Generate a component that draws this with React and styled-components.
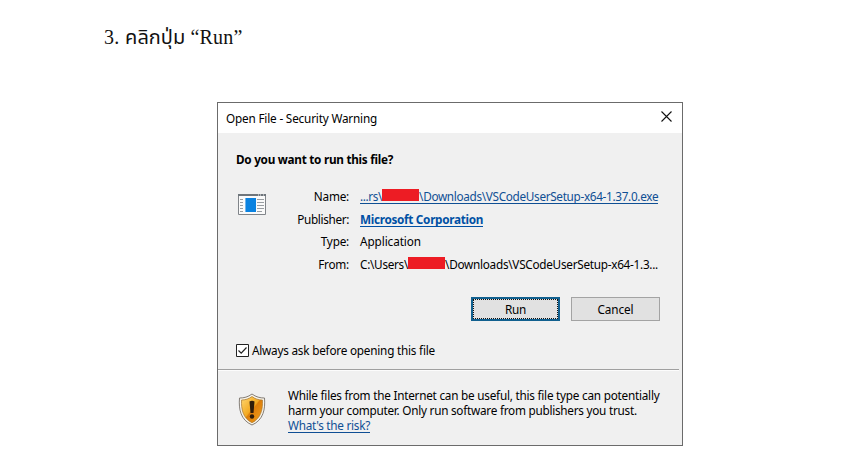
import React from 'react';
import styled, { createGlobalStyle } from 'styled-components';

const GlobalStyle = createGlobalStyle`
  * { box-sizing: border-box; }
  body { margin: 0; background: #fff; }
`;

const Page = styled.main`
  width: 861px;
  height: 466px;
  overflow: hidden;
  padding: 22px 0 0 104px;
`;

const Step = styled.h1`
  margin: 0;
  height: 80px;
  font: 400 20px/31px "Liberation Serif", "Noto Sans Thai", serif;
  letter-spacing: 0.2px;
  color: #111;
`;

const Thai = styled.span`
  font-size: 20px;
  letter-spacing: 0;
  margin-left: 0.5px;
`;

const Dialog = styled.section`
  width: 466px;
  height: 344px;
  margin-left: 113px;
  border: 1px solid #6b6b6b;
  background: #f0f0f0;
  color: #000;
  font: 400 11.75px/15px "Noto Sans", "Open Sans", sans-serif;
`;

const TitleBar = styled.header`
  height: 30px;
  display: flex;
  align-items: center;
  justify-content: space-between;
  padding: 0 10px 0 8px;
  background: #fff;
`;

const CloseIcon = styled.svg`
  width: 11px;
  height: 11px;
  margin-bottom: 3px;
`;

const Text = styled.span`
  white-space: pre;
  letter-spacing: ${(p) => p.$track ?? -0.22}px;
`;

const Question = styled.h2`
  margin: 0;
  padding: 19px 0 0 18px;
  height: 56px;
  font: inherit;
  font-weight: 700;
`;

const Details = styled.div`
  display: flex;
  height: 108px;
  padding-left: 20px;
`;

const FileIcon = styled.svg`
  width: 28px;
  height: 21px;
  margin-top: 5px;
`;

const Fields = styled.dl`
  margin: 0;
  display: grid;
  grid-template-columns: 83px 1fr;
  grid-template-rows: 23px 22px 23px 22px;
  column-gap: 11px;
`;

const Label = styled.dt`
  text-align: right;
`;

const Value = styled.dd`
  margin: 0;
  display: flex;
  white-space: pre;
`;

const Link = styled.a`
  display: flex;
  height: 15px;
  color: ${(p) => (p.$strong ? '#0050a4' : '#0f4f94')};
  font-weight: ${(p) => (p.$strong ? 700 : 400)};
  box-shadow: 0 -1px 0 ${(p) => (p.$strong ? '#0050a4' : '#0f4f94')} inset;
`;

const Redaction = styled.span`
  width: ${(p) => p.$width}px;
  height: 12px;
  background: #ed1c24;
`;

const Actions = styled.div`
  display: flex;
  justify-content: flex-end;
  gap: 11px;
  padding: 0 22px 0 0;
  height: 47px;
`;

const Button = styled.button`
  width: 89px;
  height: 24px;
  padding: 0;
  border: ${(p) => (p.$primary ? '2px solid #11608f' : '1px solid #a3a3a3')};
  background: #e1e1e1;
  color: #000;
  font: inherit;
  outline: ${(p) => (p.$primary ? '1px dotted #111' : 'none')};
  outline-offset: -3px;
`;

const CheckRow = styled.label`
  display: flex;
  gap: 3px;
  height: 25px;
  padding-left: 18px;
  line-height: 13px;
`;

const CheckBox = styled.svg`
  width: 13px;
  height: 13px;
`;

const Rule = styled.div`
  height: 2px;
  margin-right: 3px;
  border-top: 1px solid #a0a0a0;
  border-bottom: 1px solid #fcfcfc;
`;

const Warning = styled.footer`
  display: flex;
  gap: 22px;
  padding: 17px 0 0 20px;
`;

const Shield = styled.svg`
  width: 28px;
  height: 33px;
  margin-top: 5px;
`;

const Advice = styled.div`
  display: flex;
  flex-direction: column;
  align-items: flex-start;
`;

export default function App() {
  return (
    <>
      <GlobalStyle />
      <Page>
        <Step>3. <Thai>คลิกปุ่ม</Thai> “Run”</Step>
        <Dialog>
          <TitleBar>
            <Text $track={-0.18}>Open File - Security Warning</Text>
            <CloseIcon viewBox="0 0 11 11" fill="none" stroke="#111" strokeWidth="1.1">
              <path d="M.5.5l10 10M10.5.5l-10 10" />
            </CloseIcon>
          </TitleBar>
          <Question><Text $track={-0.28}>Do you want to run this file?</Text></Question>
          <Details>
            <FileIcon viewBox="0 0 28 21">
              <path fill="#fafafa" stroke="#808489" d="M.5.5h27v20H.5z" />
              <path fill="#6e757b" d="M0 0h28v2H0z" />
              <path stroke="#eee" d="M20 1h1m1 0h1m2 0h1" />
              <path fill="#0a82e0" d="M7 4h11v14H7z" />
              <path stroke="#6fb4ec" d="M7.500 4v14" />
              <path stroke="#989da1" d="M2 5.500h3m-3 3h3m-3 3h3m-3 3h3m-3 3h3M19 5.500h7m-7 3h7m-7 3h7m-7 3h7m-7 3h5" />
            </FileIcon>
            <Fields>
              <Label><Text>Name:</Text></Label>
              <Value>
                <Link>
                  <Text $track={-0.37}>...rs\</Text>
                  <Redaction $width={37} />
                  <Text $track={-0.32}>\Downloads\VSCodeUserSetup-x64-1.37.0.exe</Text>
                </Link>
              </Value>
              <Label><Text $track={-0.35}>Publisher:</Text></Label>
              <Value><Link $strong><Text $track={-0.31}>Microsoft Corporation</Text></Link></Value>
              <Label><Text>Type:</Text></Label>
              <Value><Text $track={-0.08}>Application</Text></Value>
              <Label><Text>From:</Text></Label>
              <Value>
                <Text $track={-0.29}>C:\Users\</Text>
                <Redaction $width={37} />
                <Text $track={-0.27}>\Downloads\VSCodeUserSetup-x64-1.3...</Text>
              </Value>
            </Fields>
          </Details>
          <Actions>
            <Button $primary><Text>Run</Text></Button>
            <Button><Text $track={-0.1}>Cancel</Text></Button>
          </Actions>
          <CheckRow>
            <CheckBox viewBox="0 0 13 13" fill="none" stroke="#222">
              <path fill="#fff" d="M.5.5h12v12H.5z" />
              <path strokeWidth="1.2" d="M2.500 6.500l2.700 2.700 5.300-5.700" />
            </CheckBox>
            <Text $track={-0.22}>Always ask before opening this file</Text>
          </CheckRow>
          <Rule />
          <Warning>
            <Shield viewBox="0 0 28 33">
              <defs>
                <linearGradient id="gold" x1="0" y1="0" x2="1" y2="1">
                  <stop offset="0" stopColor="#ffd873" />
                  <stop offset=".48" stopColor="#f3a81f" />
                  <stop offset=".52" stopColor="#dc7d0b" />
                  <stop offset="1" stopColor="#f5a21a" />
                </linearGradient>
              </defs>
              <path fill="#f7f3e8" stroke="#77716a" strokeWidth=".9" d="M14 1C10 4 6 5 1.500 5C.6 16 2.500 27 14 32C25.500 27 27.400 16 26.500 5C22 5 18 4 14 1z" />
              <path fill="url(#gold)" stroke="#a8742a" strokeWidth=".7" d="M14 3.500C11 6 7 7 3.600 7C3 16 5 25.500 14 29.700C23 25.500 25 16 24.400 7C21 7 17 6 14 3.500z" />
              <path fill="#2e1c0a" d="M11.500 8.500q2.500-1.300 5 0l-1 11.500h-3z" />
              <circle cx="14" cy="23.500" r="2.200" fill="#2e1c0a" />
            </Shield>
            <Advice>
              <Text $track={-0.235}>While files from the Internet can be useful, this file type can potentially</Text>
              <Text $track={-0.25}>harm your computer. Only run software from publishers you trust.</Text>
              <Link><Text $track={-0.27}>What's the risk?</Text></Link>
            </Advice>
          </Warning>
        </Dialog>
      </Page>
    </>
  );
}
